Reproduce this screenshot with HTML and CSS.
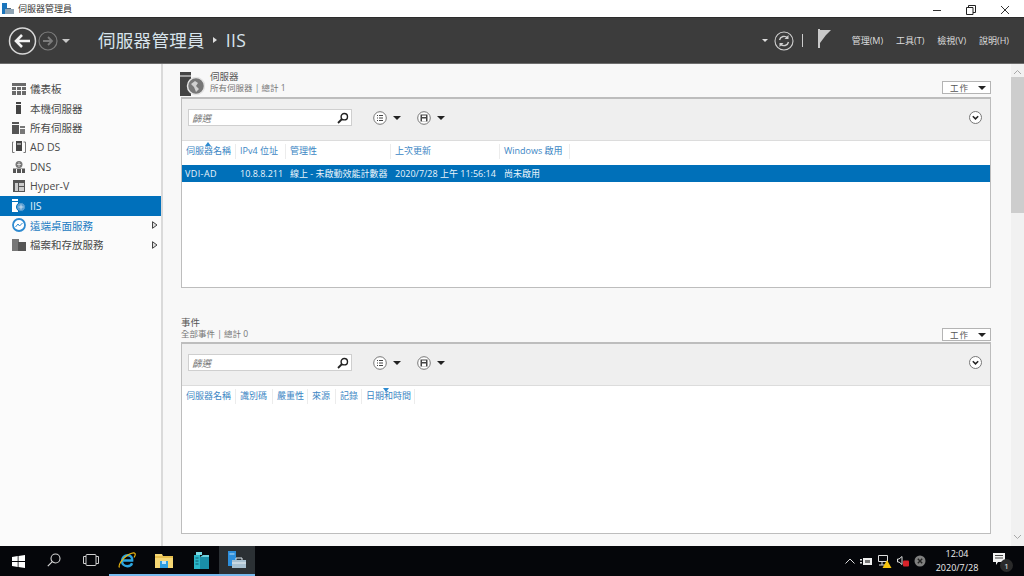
FILE: index.html
```html
<!DOCTYPE html>
<html lang="zh-Hant">
<head>
<meta charset="utf-8">
<title>伺服器管理員</title>
<link rel="stylesheet" href="styles.css">
</head>
<body>
<div class="titlebar">
  <svg class="app-ico" width="12" height="12" viewBox="0 0 12 12"><rect x="0" y="0" width="5" height="11" fill="#1b75bc"/><rect x="3" y="6" width="9" height="5" fill="#8fa4b4"/><rect x="5" y="5" width="4" height="1" fill="#56697a"/></svg>
  <span class="title-text">伺服器管理員</span>
  <div class="winbtns">
    <svg width="10" height="10" viewBox="0 0 10 10"><path d="M1 5.500h8" stroke="#333" fill="none"/></svg>
    <svg width="10" height="10" viewBox="0 0 10 10"><path d="M.5 2.500h6.500v7h-6.500zM2.500 2.500v-2h7v7h-2.500" stroke="#222" fill="none"/></svg>
    <svg width="10" height="10" viewBox="0 0 10 10"><path d="M1 1l8 8M9 1l-8 8" stroke="#333" fill="none"/></svg>
  </div>
</div>
<header class="topbar">
  <svg class="back" width="30" height="30" viewBox="0 0 30 30"><circle cx="14.500" cy="15" r="13" fill="none" stroke="#d8d8d8" stroke-width="1.500"/><path d="M22 15H8M14 9l-6 6 6 6" fill="none" stroke="#f2f2f2" stroke-width="2.600"/></svg>
  <svg class="forward" width="20" height="20" viewBox="0 0 20 20"><circle cx="10" cy="10" r="9" fill="none" stroke="#7c7c7c" stroke-width="1.200"/><path d="M5 10h9M10 6l4 4-4 4" fill="none" stroke="#7c7c7c" stroke-width="1.800"/></svg>
  <span class="drop-white"></span>
  <div class="crumb"><span>伺服器管理員</span><span class="crumb-sep"></span><span>IIS</span></div>
  <div class="top-right">
    <span class="drop-small"></span>
    <svg width="20" height="20" viewBox="0 0 20 20"><circle cx="10" cy="10" r="9" fill="none" stroke="#cfcfcf" stroke-width="1.100"/><path d="M5.500 9a4.600 4.600 0 0 1 8-2M14.500 11a4.600 4.600 0 0 1-8 2" fill="none" stroke="#cfcfcf" stroke-width="1.400"/><path d="M14.500 4v4h-4zM5.500 16v-4h4z" fill="#cfcfcf"/></svg>
    <span class="pipe"></span>
    <svg class="flag" width="14" height="19" viewBox="0 0 14 19"><path d="M0 0h2v19H0zM2 1h11l-5 5-6 8z" fill="#c9c9c9"/></svg>
    <nav class="menu"><span>管理(M)</span><span>工具(T)</span><span>檢視(V)</span><span>說明(H)</span></nav>
  </div>
</header>
<div class="workspace">
  <aside class="sidebar">
    <div class="nav-item"><svg width="14" height="12" viewBox="0 0 14 12"><path d="M0 0h14v12H0z" fill="#6a6a6a"/><path d="M0 3.500h14M0 7.500h14M4.500 3v9M9.500 3v9" stroke="#f8f8f8"/></svg><span>儀表板</span></div>
    <div class="nav-item"><svg width="14" height="12" viewBox="0 0 14 12"><path d="M4 0h5v12H4z" fill="#444"/><path d="M4 2.500h5" stroke="#f8f8f8"/></svg><span>本機伺服器</span></div>
    <div class="nav-item"><svg width="14" height="12" viewBox="0 0 14 12"><path d="M0 0h7v12H0z" fill="#555"/><path d="M8 4h5v8H8z" fill="#777"/><path d="M0 2.500h7M8 6.500h5" stroke="#f8f8f8"/></svg><span>所有伺服器</span></div>
    <div class="nav-item"><svg width="14" height="12" viewBox="0 0 14 12"><path d="M1.500 1H.5v10.500h2M11.500 1h2v10.500h-2" fill="none" stroke="#777"/><path d="M4 0h6v10H4z" fill="#444"/><path d="M5 3h4" stroke="#f8f8f8"/></svg><span>AD DS</span></div>
    <div class="nav-item"><svg width="14" height="12" viewBox="0 0 14 12"><circle cx="7" cy="3.500" r="3.500" fill="#777"/><path d="M5 3.500h4M7 1v5" stroke="#f0f0f0" stroke-width=".7"/><path d="M1 7.500h12V12H1z" fill="#555"/><path d="M4.500 8v4M9.500 8v4" stroke="#f8f8f8"/></svg><span>DNS</span></div>
    <div class="nav-item"><svg width="14" height="12" viewBox="0 0 14 12"><path d="M1 0h12v12H1z" fill="#555"/><path d="M7 3h5v3H7zM7 7h5v4H7zM3 3h3v8H3z" fill="#ccc"/></svg><span>Hyper-V</span></div>
    <div class="nav-item is-active"><svg width="14" height="13" viewBox="0 0 14 13"><path d="M0 0h6v13H0z" fill="#fff"/><path d="M0 2.500h6" stroke="#0070bb"/><circle cx="9" cy="8" r="4.500" fill="#5b9fd2" stroke="#0070bb"/><path d="M6.500 8h5M9 5.500v5" stroke="#d8e9f5" stroke-width=".8"/></svg><span>IIS</span></div>
    <div class="nav-item is-link"><svg width="14" height="14" viewBox="0 0 14 14"><circle cx="7" cy="7" r="6" fill="#fff" stroke="#2d8ad0" stroke-width="1.800"/><path d="M3.500 9l2.500-3 1.500 2 3-3" fill="none" stroke="#2d8ad0"/></svg><span>遠端桌面服務</span><svg class="arrow" width="6" height="8" viewBox="0 0 6 8"><path d="M.5.700L5 4 .5 7.300z" fill="#ddd" stroke="#444"/></svg></div>
    <div class="nav-item"><svg width="14" height="12" viewBox="0 0 14 12"><path d="M0 0h7v12H0z" fill="#777"/><path d="M6 3h8v9H6z" fill="#555"/></svg><span>檔案和存放服務</span><svg class="arrow" width="6" height="8" viewBox="0 0 6 8"><path d="M.5.700L5 4 .5 7.300z" fill="#ddd" stroke="#444"/></svg></div>
  </aside>
  <main class="content">
    <section class="group">
      <div class="group-head">
        <svg class="server-ico" width="25" height="26" viewBox="0 0 25 26"><path d="M0 0h11v24H0z" fill="#444"/><path d="M0 4h11" stroke="#f8f8f8"/><circle cx="16" cy="14" r="8.500" fill="#777" stroke="#e4e4e4" stroke-width="1.500"/><path d="M11 12l4-3 3 2-2 3 3 3-3 3-2-5z" fill="#d0d0d0"/></svg>
        <div class="head-text"><div class="head-title">伺服器</div><div class="head-sub">所有伺服器 | 總計 1</div></div>
        <div class="tasks"><span>工作</span><i class="tri"></i></div>
      </div>
      <div class="panel panel-top">
        <div class="toolbar">
          <div class="filter"><span>篩選</span><svg width="12" height="12" viewBox="0 0 12 12"><circle cx="7.300" cy="4.700" r="3.200" fill="none" stroke="#222" stroke-width="1.400"/><path d="M5 7l-4 4" stroke="#222" stroke-width="1.800"/></svg></div>
          <div class="tool"><svg width="14" height="14" viewBox="0 0 14 14"><circle cx="7" cy="7" r="6.300" fill="#fff" stroke="#777"/><path d="M4 4.500h1M6 4.500h4M4 7h1M6 7h4M4 9.500h1M6 9.500h4" stroke="#444"/></svg><i class="tri"></i></div>
          <div class="tool"><svg width="14" height="14" viewBox="0 0 14 14"><circle cx="7" cy="7" r="6.300" fill="#fff" stroke="#777"/><path d="M3.500 3.500h7v7h-7z" fill="#444"/><path d="M5 4.500h4v1.500H5zM5 7.500h4v3H5z" fill="#fff"/></svg><i class="tri"></i></div>
          <svg class="expand" width="13" height="13" viewBox="0 0 13 13"><circle cx="6.500" cy="6.500" r="6" fill="#fff" stroke="#777"/><path d="M3.800 5.200l2.700 2.700 2.700-2.700" fill="none" stroke="#222" stroke-width="1.500"/></svg>
        </div>
        <div class="cols">
          <span class="col c1 sorted">伺服器名稱</span><span class="col c2">IPv4 位址</span><span class="col c3">管理性</span><span class="col c4">上次更新</span><span class="col c5">Windows 啟用</span>
        </div>
        <div class="row-selected">
          <span class="cell c1">VDI-AD</span><span class="cell c2">10.8.8.211</span><span class="cell c3">線上 - 未啟動效能計數器</span><span class="cell c4">2020/7/28 上午 11:56:14</span><span class="cell c5">尚未啟用</span>
        </div>
      </div>
    </section>
    <section class="group group-events">
      <div class="group-head head-events">
        <div class="head-text"><div class="head-title">事件</div><div class="head-sub">全部事件 | 總計 0</div></div>
        <div class="tasks"><span>工作</span><i class="tri"></i></div>
      </div>
      <div class="panel panel-bottom">
        <div class="toolbar">
          <div class="filter"><span>篩選</span><svg width="12" height="12" viewBox="0 0 12 12"><circle cx="7.300" cy="4.700" r="3.200" fill="none" stroke="#222" stroke-width="1.400"/><path d="M5 7l-4 4" stroke="#222" stroke-width="1.800"/></svg></div>
          <div class="tool"><svg width="14" height="14" viewBox="0 0 14 14"><circle cx="7" cy="7" r="6.300" fill="#fff" stroke="#777"/><path d="M4 4.500h1M6 4.500h4M4 7h1M6 7h4M4 9.500h1M6 9.500h4" stroke="#444"/></svg><i class="tri"></i></div>
          <div class="tool"><svg width="14" height="14" viewBox="0 0 14 14"><circle cx="7" cy="7" r="6.300" fill="#fff" stroke="#777"/><path d="M3.500 3.500h7v7h-7z" fill="#444"/><path d="M5 4.500h4v1.500H5zM5 7.500h4v3H5z" fill="#fff"/></svg><i class="tri"></i></div>
          <svg class="expand" width="13" height="13" viewBox="0 0 13 13"><circle cx="6.500" cy="6.500" r="6" fill="#fff" stroke="#777"/><path d="M3.800 5.200l2.700 2.700 2.700-2.700" fill="none" stroke="#222" stroke-width="1.500"/></svg>
        </div>
        <div class="cols cols-events">
          <span class="col e1">伺服器名稱</span><span class="col e2">識別碼</span><span class="col e3">嚴重性</span><span class="col e4">來源</span><span class="col e5">記錄</span><span class="col e6 sorted">日期和時間</span>
        </div>
      </div>
    </section>
  </main>
  <div class="scrollbar">
    <svg class="sb-up" width="9" height="6" viewBox="0 0 9 6"><path d="M1 5l3.500-3.500L8 5" fill="none" stroke="#a8a8a8"/></svg>
    <div class="sb-thumb"></div>
    <svg class="sb-down" width="9" height="6" viewBox="0 0 9 6"><path d="M1 1l3.500 3.500L8 1" fill="none" stroke="#a8a8a8"/></svg>
  </div>
</div>
<footer class="taskbar">
  <div class="task-start"><svg width="13" height="13" viewBox="0 0 13 13"><path d="M0 2l5.700-.9v5H0zM6.500 1l6.500-1v6.100H6.500zM0 6.900h5.700v5L0 11zM6.500 6.900H13V13l-6.500-1z" fill="#fff"/></svg></div>
  <div class="task-btn"><svg width="14" height="14" viewBox="0 0 14 14"><circle cx="8.500" cy="5.500" r="4.500" fill="none" stroke="#d5d5d5" stroke-width="1.100"/><path d="M5.300 8.700L.8 13.200" stroke="#d5d5d5" stroke-width="1.200"/></svg></div>
  <div class="task-btn"><svg width="16" height="12" viewBox="0 0 16 12"><rect x="3" y=".5" width="10" height="11" rx="1" fill="none" stroke="#cfcfcf"/><path d="M3 2.500H.5v7H3M13 2.500h2.500v7H13" fill="none" stroke="#cfcfcf"/></svg></div>
  <div class="task-btn is-running"><svg width="18" height="18" viewBox="0 0 18 18"><path d="M4 9.500h10.200c.3-3-1.500-5.300-4.500-5.300-3.200 0-5.700 2.600-5.700 5.800 0 3 2.200 5.200 5.300 5.200 2.300 0 4-1 4.800-3" fill="none" stroke="#2da6e0" stroke-width="2.400"/><path d="M1.500 16.500c-1.500-2 2-8 7-11.500C12 2.500 16 1 17 2.500c.5 1 0 2.500-1 4" fill="none" stroke="#f0b90f" stroke-width="1.200"/></svg></div>
  <div class="task-btn is-running"><svg width="18" height="16" viewBox="0 0 18 16"><path d="M0 2h7l1 2h10v12H0z" fill="#f6d774"/><path d="M0 4h18v2H0z" fill="#e8bf4e"/><path d="M5 9h8v7H5z" fill="#2f9ee0"/><path d="M7 9h4v3H7z" fill="#bfe3f7"/></svg></div>
  <div class="task-btn is-running"><svg width="18" height="17" viewBox="0 0 18 17"><path d="M3 3h6v14H3z" fill="#2ab6c8"/><path d="M5 0h6v3H5z" fill="#7adbe6"/><path d="M9 5h9v12H9z" fill="#1a8ea8"/><path d="M9 5l3-2h6v2z" fill="#6cd0de"/><path d="M4.500 6h3M4.500 9h3M4.500 12h3" stroke="#0e5a6c"/></svg></div>
  <div class="task-btn is-running is-current"><svg width="20" height="18" viewBox="0 0 20 18"><path d="M1 0h8v15H1z" fill="#2d8fdd"/><path d="M2.500 3h5" stroke="#bfe0f7"/><path d="M5 9h14v8H5z" fill="#a8c0d0"/><path d="M9 9V7h6v2" fill="none" stroke="#dfe8ee"/><path d="M5 12h14" stroke="#e8eef2"/></svg></div>
  <div class="tray">
    <svg width="10" height="6" viewBox="0 0 10 6"><path d="M.5 5.500L5 1l4.500 4.500" fill="none" stroke="#ddd"/></svg>
    <svg width="13" height="10" viewBox="0 0 13 10"><path d="M3 2h9v7H3z" fill="#eee"/><path d="M0 3h2v1.500H0zM0 6h2v1.500H0z" fill="#ddd"/><path d="M5 4h5v3H5z" fill="#777"/></svg>
    <svg width="14" height="14" viewBox="0 0 14 14"><path d="M.5 1.500h9v6h-9z" fill="none" stroke="#ddd"/><path d="M4 8v3M1 11h6" stroke="#ddd"/><path d="M9 6l4.500 8h-9z" fill="#f4c20d"/></svg>
    <svg width="12" height="12" viewBox="0 0 12 12"><path d="M.5 4v3H2l3 2.500V1.500L2 4z" fill="none" stroke="#ddd"/><rect x="6" y="5.500" width="6" height="6" rx="1" fill="#d8232a"/></svg>
    <svg width="12" height="12" viewBox="0 0 12 12"><circle cx="6" cy="6" r="5.500" fill="#7f7f7f"/><path d="M3.800 3.800l4.400 4.400M8.200 3.800L3.800 8.200" stroke="#222" stroke-width="1.400"/></svg>
    <div class="clock"><div>12:04</div><div>2020/7/28</div></div>
    <div class="notify"><svg width="12" height="12" viewBox="0 0 12 12"><path d="M0 0h12v9H5l-2 3V9H0z" fill="#f2f2f2"/><path d="M2 2.500h8M2 5h8" stroke="#444"/></svg><b>1</b></div>
  </div>
</footer>
</body>
</html>
```
FILE: styles.css
```css
* { box-sizing: border-box; }
html, body { margin: 0; height: 100%; }
body {
  width: 1024px; height: 576px; overflow: hidden;
  display: flex; flex-direction: column;
  font-family: "Open Sans", "Noto Sans CJK TC", sans-serif;
  color: #444; background: #f8f8f8;
}
svg { display: block; flex: none; }
i { display: block; }

.titlebar { height: 17px; background: #fff; display: flex; align-items: center; padding-left: 2px; flex: none; }
.title-text { font-size: 9px; margin-left: 4px; color: #333; }
.winbtns { margin-left: auto; display: flex; gap: 24px; padding-right: 14px; margin-top: 2px; }

.topbar { height: 47px; flex: none; background: #3c3c3c; border-top: 1px solid #2c2c2c; border-bottom: 1px solid #6d6d6d; display: flex; align-items: center; padding-left: 8px; color: #dcdcdc; }
.forward { margin-left: 1px; }
.back { margin-right: -1px; }
.drop-white { width: 0; height: 0; border: 4px solid transparent; border-top: 4px solid #c8c8c8; border-bottom: 0; margin-left: 4px; }
.crumb { margin-left: 28px; font-size: 17.500px; display: flex; align-items: center; color: #d8e4ec; letter-spacing: .3px; padding-bottom: 2px; }
.crumb-sep { width: 0; height: 0; border: 3px solid transparent; border-left: 4px solid #ddd; border-right: 0; margin: 0 9px 0 8px; }
.top-right { margin-left: auto; display: flex; align-items: center; }
.drop-small { width: 0; height: 0; border: 3px solid transparent; border-top: 3px solid #ddd; border-bottom: 0; margin-right: 6px; }
.pipe { width: 1px; height: 13px; background: #ccc; margin: 0 15px 0 8px; }
.flag { margin-bottom: 5px; }
.menu { display: flex; font-size: 9px; margin-left: 20px; padding-right: 15px; gap: 13px; color: #dcdcdc; }

.workspace { flex: 1; display: flex; min-height: 0; }
.sidebar { width: 163px; flex: none; border-right: 2px solid #dadada; background: #fbfbfb; padding-top: 15px; }
.nav-item { height: 19.500px; display: flex; align-items: center; padding-left: 12px; font-size: 10.500px; color: #4a4a4a; }
.nav-item span { margin-left: 4px; }
.is-active { background: #0070bb; color: #e4f1fa; }
.is-link { color: #1b7cc2; }
.arrow { margin-left: auto; margin-right: 3px; }

.content { flex: 1; min-width: 0; display: flex; flex-direction: column; padding: 7px 20px 0 18px; background: #f8f8f8; overflow: hidden; }
.group-head { display: flex; height: 26px; align-items: flex-start; }
.server-ico { margin: 1px 5px 0 -1px; }
.head-text { line-height: 11px; }
.head-title { font-size: 9.500px; color: #555; }
.head-sub { font-size: 8.500px; color: #777; }
.tasks { margin-left: auto; margin-top: 10px; width: 49px; height: 13px; background: #fff; border: 1px solid #b4b4b4; font-size: 8.500px; line-height: 11px; display: flex; align-items: center; padding-left: 7px; color: #555; letter-spacing: 1px; }
.tasks .tri { margin-left: auto; margin-right: 4px; }
.tri { width: 0; height: 0; border: 4px solid transparent; border-top: 4px solid #222; border-bottom: 0; }

.panel { border: 1px solid #bdbdbd; border-width: 2px 1px 1px 1px; background: #fff; }
.panel-top { height: 191px; }
.panel-bottom { height: 192px; }
.toolbar { height: 42px; background: #efefef; border-bottom: 1px solid #dcdcdc; display: flex; align-items: center; padding: 0 3px 4px 6px; }
.filter { width: 164px; height: 17px; background: #fff; border: 1px solid #cfcfcf; display: flex; align-items: center; justify-content: space-between; padding: 0 2px 0 3px; font-size: 9.500px; font-style: italic; color: #777; }
.tool { display: flex; align-items: center; gap: 6px; margin-left: 21px; width: 28px; }
.tool + .tool { margin-left: 16px; }
.expand { margin-left: auto; margin-right: 5px; }

.cols { height: 24px; display: flex; padding-top: 3px; }
.col { height: 15px; font-size: 9px; line-height: 14px; color: #3b86c4; padding-left: 4px; border-right: 1px solid #ececec; white-space: nowrap; position: relative; }
.sorted::before { content: ""; position: absolute; left: 23px; top: -2px; width: 0; height: 0; border: 3px solid transparent; border-bottom: 4px solid #2d8ad0; border-top: 0; }
.c1 { width: 54px; }
.c2 { width: 50px; }
.c3 { width: 105px; }
.c4 { width: 109px; }
.c5 { width: 70px; }
.row-selected { height: 17px; background: #0070b9; color: #eaf4fb; display: flex; align-items: center; font-size: 9px; white-space: nowrap; }
.cell { padding-left: 4px; }
.cell.c1 { padding-left: 3px; letter-spacing: .4px; }
.group-events { margin-top: 29px; }
.head-events { height: 25px; }
.head-events .tasks { margin-top: 11px; }
.cols-events .sorted::before { top: -1px; border-bottom: 0; border-top: 4px solid #2d8ad0; left: 21px; }
.e1 { width: 54px; }
.e2 { width: 37px; }
.e3 { width: 35px; }
.e4 { width: 28px; }
.e5 { width: 26px; }
.e6 { width: 53px; }

.scrollbar { width: 13px; flex: none; background: #f1f1f1; display: flex; flex-direction: column; align-items: center; padding-top: 5px; }
.sb-thumb { width: 13px; height: 136px; background: #cdcdcd; margin-top: 2px; }
.sb-down { margin-top: auto; margin-bottom: 6px; }

.taskbar { height: 30px; flex: none; background: #05060a; display: flex; align-items: stretch; color: #eee; }
.task-start { width: 36px; display: flex; align-items: center; justify-content: center; padding-left: 1px; }
.task-btn { width: 36.500px; display: flex; align-items: center; justify-content: center; border-bottom: 2px solid transparent; }
.is-running { border-bottom-color: #76b9ed; }
.is-current { background: #2b3034; }
.tray { margin-left: auto; display: flex; align-items: center; gap: 5px; padding-right: 11px; }
.clock { font-size: 9px; line-height: 14px; text-align: center; width: 52px; margin-right: 5px; color: #eee; }
.notify { position: relative; width: 20px; height: 26px; padding-top: 5px; }
.notify b { position: absolute; left: 7px; top: 11px; width: 13px; height: 13px; border-radius: 50%; background: #2a2a2a; font-size: 8px; line-height: 13px; text-align: center; font-weight: 400; color: #eee; }
```
